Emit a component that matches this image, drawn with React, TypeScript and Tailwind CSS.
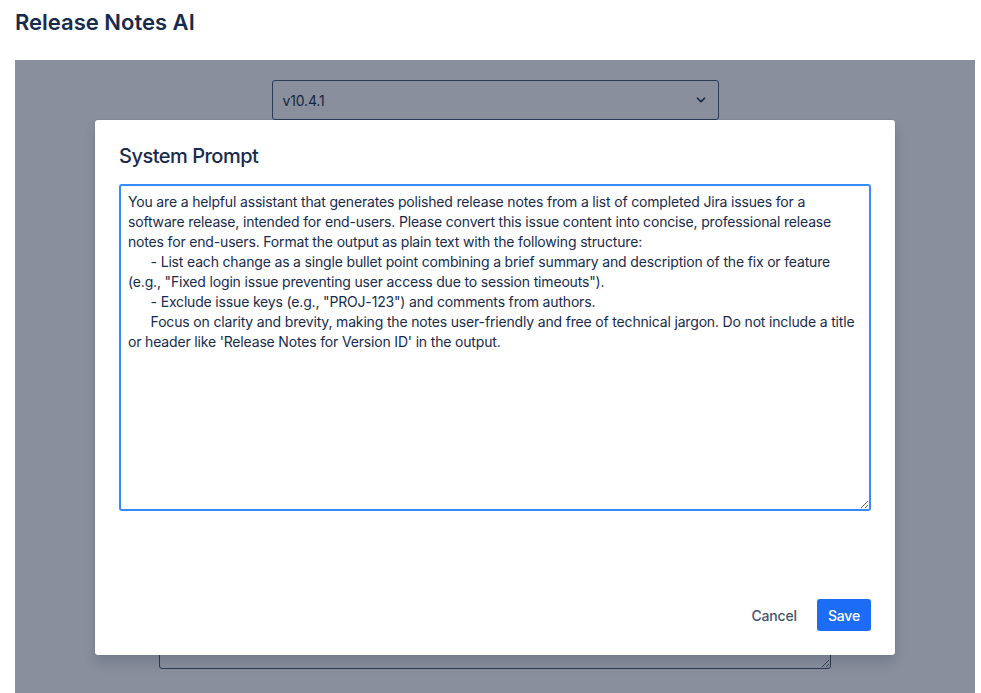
import { ChevronDown } from 'lucide-react';

const PROMPT = `You are a helpful assistant that generates polished release notes from a list of completed Jira issues for a software release, intended for end-users. Please convert this issue content into concise, professional release notes for end-users. Format the output as plain text with the following structure:
      - List each change as a single bullet point combining a brief summary and description of the fix or feature (e.g., "Fixed login issue preventing user access due to session timeouts").
      - Exclude issue keys (e.g., "PROJ-123") and comments from authors.
      Focus on clarity and brevity, making the notes user-friendly and free of technical jargon. Do not include a title or header like 'Release Notes for Version ID' in the output.`;

export default function App() {
  return (
    <div
      className="h-[693px] w-[981px] overflow-hidden bg-white text-[#172b4d]"
      style={{ fontFamily: 'Inter, "Noto Sans", sans-serif' }}
    >
      <h1 className="px-[15px] pt-[7px] text-[22px] font-semibold leading-[30px] text-[#172b4d]">Release Notes AI</h1>

      <div className="relative ml-[15px] mt-[23px] h-[640px] w-[960px] bg-white">
        {/* page under the dialog */}
        <div className="flex flex-col items-center pt-[20px]">
          <div className="flex h-[40px] w-[447px] items-center justify-between rounded-[3px] border border-[#44546f] px-[10px] text-[14px] tracking-[-0.17px]">
            <span>v10.4.1</span>
            <ChevronDown size={14} strokeWidth={3} className="text-[#172b4d]" />
          </div>
          <div className="h-[429px] w-[672px]" />
          <textarea
            readOnly
            className="h-[120px] w-[672px] rounded-[3px] border border-[#44546f] bg-white"
          />
        </div>

        {/* blanket */}
        <div className="absolute inset-0 bg-[#131f3a]/50" />

        {/* dialog */}
        <div className="absolute left-[80px] top-[60px] flex h-[535px] w-[800px] flex-col rounded-[3px] bg-white px-[24px] pb-[24px] pt-[22px] shadow-[0_8px_12px_rgba(9,30,66,0.15),0_0_1px_rgba(9,30,66,0.31)]">
          <h2 className="text-[20px] font-medium leading-[28px] tracking-[-0.5px] text-[#172b4d]">System Prompt</h2>
          <textarea
            readOnly
            value={PROMPT}
            className="mt-[14px] h-[327px] w-full shrink-0 resize-y rounded-[3px] border-2 border-[#388bff] bg-white px-[7px] pt-[6px] text-[14px] leading-[20px] tracking-[-0.17px] text-[#172b4d] outline-none"
            style={{ fontFamily: 'Inter, "Noto Sans", sans-serif' }}
          />
          <div className="mt-auto flex items-center justify-end gap-[8px]">
            <button className="h-[32px] rounded-[3px] px-[12px] text-[14px] font-medium tracking-[-0.17px] text-[#44546f]">Cancel</button>
            <button className="h-[32px] rounded-[3px] bg-[#1d6cf5] px-[11px] text-[14px] font-medium tracking-[-0.17px] text-white">Save</button>
          </div>
        </div>
      </div>
    </div>
  );
}
